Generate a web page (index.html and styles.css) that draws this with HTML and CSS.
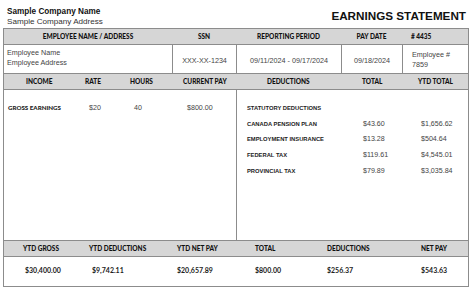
FILE: index.html
```html
<!DOCTYPE html>
<html lang="en">
	<head>
		<meta charset="UTF-8" />
		<meta name="viewport" content="width=device-width, initial-scale=1.0" />
		<title>Earnings Statement</title>
		<link rel="stylesheet" href="styles.css">
	</head>
	<body>
		<div class="top">
			<div class="company">
				<div class="co-name">Sample Company Name</div>
				<div class="co-addr">Sample Company Address</div>
			</div>
			<h1 class="title">EARNINGS STATEMENT</h1>
		</div>

		<div class="sheet">
			<div class="head-row info-cols">
				<div class="center">EMPLOYEE NAME / ADDRESS</div>
				<div class="center">SSN</div>
				<div class="center">REPORTING PERIOD</div>
				<div class="center">PAY DATE</div>
				<div class="emp-no"># 4435</div>
			</div>
			<div class="info-row info-cols">
				<div class="cell emp">Employee Name<br>Employee Address</div>
				<div class="cell mid">XXX-XX-1234</div>
				<div class="cell mid">09/11/2024 - 09/17/2024</div>
				<div class="cell mid">09/18/2024</div>
				<div class="cell emp-id">Employee #<br>7859</div>
			</div>

			<div class="head-row pay-cols">
				<div class="h-income">INCOME</div>
				<div>RATE</div>
				<div>HOURS</div>
				<div>CURRENT PAY</div>
				<div class="h-ded">DEDUCTIONS</div>
				<div>TOTAL</div>
				<div>YTD TOTAL</div>
			</div>
			<div class="pay-body">
				<div class="income">
					<div class="lbl lato">GROSS EARNINGS</div>
					<div class="val">$20</div>
					<div class="val">40</div>
					<div class="val">$800.00</div>
				</div>
				<div class="deductions">
					<div class="lbl">STATUTORY DEDUCTIONS</div><div></div><div></div>
					<div class="lbl">CANADA PENSION PLAN</div><div class="val">$43.60</div><div class="val ytd">$1,656.62</div>
					<div class="lbl">EMPLOYMENT INSURANCE</div><div class="val">$13.28</div><div class="val ytd">$504.64</div>
					<div class="lbl">FEDERAL TAX</div><div class="val">$119.61</div><div class="val ytd">$4,545.01</div>
					<div class="lbl">PROVINCIAL TAX</div><div class="val">$79.89</div><div class="val ytd">$3,035.84</div>
				</div>
			</div>

			<div class="head-row sum-cols">
				<div>YTD GROSS</div>
				<div>YTD DEDUCTIONS</div>
				<div>YTD NET PAY</div>
				<div>TOTAL</div>
				<div>DEDUCTIONS</div>
				<div>NET PAY</div>
			</div>
			<div class="sum-row sum-cols">
				<div>$30,400.00</div>
				<div>$9,742.11</div>
				<div>$20,657.89</div>
				<div>$800.00</div>
				<div>$256.37</div>
				<div>$543.63</div>
			</div>
		</div>
	</body>
</html>
```

FILE: styles.css
```css
body {
	margin: 0;
	background-color: #ffffff;
	font-family: "Liberation Sans", Arial, sans-serif;
	color: #222222;
}
.top {
	display: flex;
	justify-content: space-between;
	align-items: flex-start;
	height: 28px;
	padding: 7px 8px 0 7px;
	box-sizing: border-box;
}
.co-name {
	font-size: 8.2px;
	font-weight: bold;
	line-height: 10px;
	color: #111111;
}
.co-addr {
	font-size: 8.1px;
	line-height: 10px;
	color: #333333;
}
.title {
	margin: 2px 0 0 0;
	font-size: 11.7px;
	line-height: 14px;
	font-weight: bold;
	color: #111111;
}
.sheet {
	margin-left: 3px;
	width: 466px;
	border-left: 1px solid #8c8c8c;
	border-right: 1px solid #8c8c8c;
	border-bottom: 1px solid #8c8c8c;
	box-sizing: border-box;
}
.head-row {
	display: grid;
	align-items: center;
	height: 15px;
	background-color: #d6d6d6;
	border-top: 1px solid #8c8c8c;
	border-bottom: 1px solid #8c8c8c;
	font-family: Lato, sans-serif;
	font-weight: 900;
	font-size: 6.5px;
	color: #111111;
}
.center {
	text-align: center;
}
.info-cols {
	grid-template-columns: 168px 64px 105px 61px 1fr;
}
.emp-no {
	padding-left: 9px;
}
.info-row {
	display: grid;
	height: 28px;
	font-size: 7.2px;
	color: #444444;
}
.cell {
	border-left: 1px solid #8c8c8c;
	line-height: 9.5px;
}
.cell.emp {
	border-left: none;
	padding: 3px 0 0 3px;
}
.cell.mid {
	display: flex;
	align-items: center;
	justify-content: center;
	padding-top: 3px;
}
.cell.emp-id {
	padding: 5px 0 0 9px;
}
.pay-cols {
	grid-template-columns: 81px 45px 53px 53px 126px 56px 1fr;
}
.h-income {
	padding-left: 22px;
}
.h-ded {
	padding-left: 31px;
}
.pay-body {
	display: flex;
	height: 150px;
}
.income {
	width: 233px;
	box-sizing: border-box;
	border-right: 1px solid #8c8c8c;
	display: grid;
	grid-template-columns: 81px 45px 53px 1fr;
	grid-auto-rows: 15.7px;
	align-items: center;
	align-content: start;
	padding: 10px 0 0 4px;
}
.deductions {
	flex: 1;
	display: grid;
	grid-template-columns: 126px 56px 1fr;
	grid-auto-rows: 15.7px;
	align-items: center;
	align-content: start;
	padding: 10px 0 0 0;
}
.deductions .lbl {
	padding-left: 10px;
}
.lbl {
	font-weight: bold;
	font-size: 5.8px;
	color: #222222;
}
.lbl.lato {
	font-family: Lato, sans-serif;
	font-size: 6.2px;
	font-weight: 900;
}
.val {
	font-size: 7.1px;
	color: #444444;
}
.val.ytd {
	padding-left: 2px;
}
.sum-cols {
	grid-template-columns: 66px 88px 78px 72px 94px 1fr;
	padding-left: 19px;
}
.sum-row {
	display: grid;
	height: 29px;
	padding-top: 8px;
	box-sizing: border-box;
	font-family: Lato, sans-serif;
	font-weight: bold;
	font-size: 7px;
	line-height: 10px;
	color: #222222;
}
.sum-row div:first-child {
	padding-left: 2px;
}
.sum-row div:nth-child(2) {
	padding-left: 3px;
}
```
